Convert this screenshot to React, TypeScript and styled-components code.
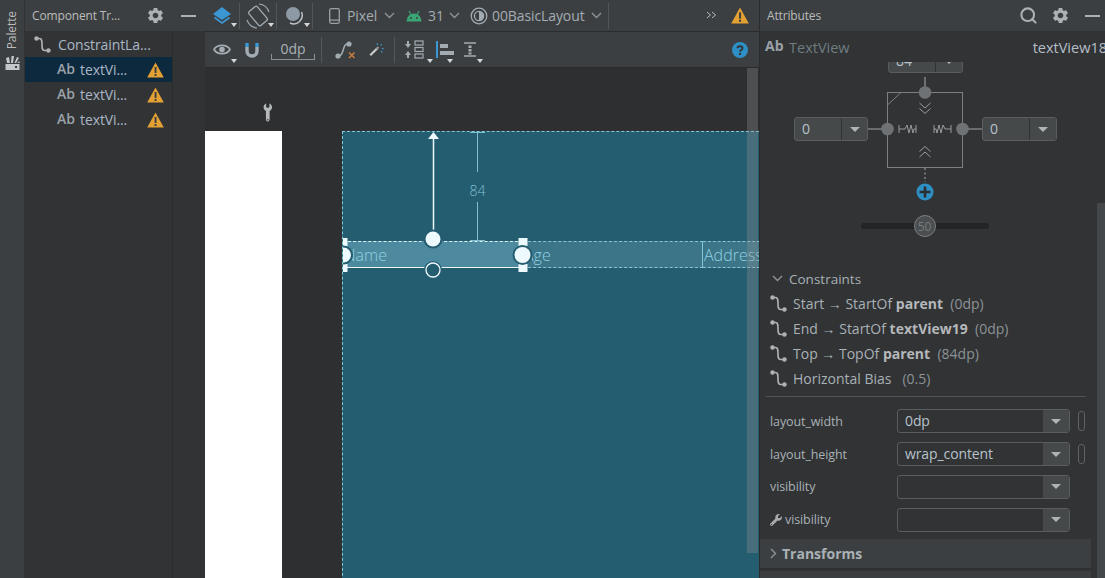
import React, { FC } from "react";
import styled, { createGlobalStyle } from "styled-components";
import { MdSettings } from "react-icons/md";
import { FaWrench } from "react-icons/fa";
import { LuSearch } from "react-icons/lu";

const GlobalStyle = createGlobalStyle`
  html, body {
    margin: 0;
    padding: 0;
    height: 100%;
    overflow: hidden;
    background: #313335;
    font-family: "Open Sans", "Liberation Sans", sans-serif;
    color: #bbbbbb;
  }
  * { box-sizing: border-box; }
`;

const Page = styled.div`
  display: flex;
  width: 1105px;
  height: 578px;
  overflow: hidden;
`;

const PaletteStrip = styled.div`
  width: 25px;
  flex: none;
  background: #3c3f41;
  border-right: 1px solid #323232;
  display: flex;
  flex-direction: column;
  align-items: center;
  padding-top: 11px;
  gap: 6px;
`;

const PaletteLabel = styled.div`
  writing-mode: vertical-rl;
  transform: rotate(180deg);
  font-size: 12px;
  line-height: 14px;
  letter-spacing: -0.1px;
`;

const TreePanel = styled.div`
  width: 180px;
  flex: none;
  display: flex;
  flex-direction: column;
  background: #313335;
`;

const PanelHeader = styled.div`
  height: 32px;
  flex: none;
  display: flex;
  align-items: center;
  background: #3c3f41;
  border-bottom: 1px solid #323232;
  padding-left: 7px;
  font-size: 12px;
  color: #bbbbbb;
`;

const HeaderTitle = styled.span`
  flex: 1;
  letter-spacing: -0.15px;
`;

const HeaderIcon = styled.span<{ $w: number }>`
  width: ${(p) => p.$w}px;
  flex: none;
  display: flex;
  justify-content: center;
  align-items: center;
  color: #aeb1b3;
  font-size: 19px;
`;

const MinusBar = styled.span`
  width: 15px;
  height: 2px;
  background: #aeb1b3;
  display: block;
`;

const TreeBody = styled.div`
  flex: 1;
  display: flex;
`;

const TreeList = styled.div`
  width: 147px;
  flex: none;
  border-right: 1px solid #2b2d2e;
  box-sizing: content-box;
`;

const TreeRow = styled.div<{ $selected?: boolean; $child?: boolean }>`
  height: 25px;
  display: flex;
  align-items: center;
  padding-left: ${(p) => (p.$child ? 32 : 9)}px;
  background: ${(p) => (p.$selected ? "#0d293e" : "transparent")};
  font-size: 14px;
  color: #a9b7c6;
  letter-spacing: -0.1px;
`;

const TreeConnectorGap = styled.span`
  width: 7px;
  flex: none;
`;

const TreeAb = styled.span`
  font-size: 14px;
  font-weight: 600;
  color: #9aa2a8;
  width: 23px;
  margin-top: -2px;
`;

const TreeName = styled.span`
  flex: 1;
`;

const TreeWarn = styled.span`
  width: 25px;
  display: flex;
`;

const Middle = styled.div`
  width: 554px;
  flex: none;
  display: flex;
  flex-direction: column;
`;

const Toolbar = styled.div<{ $h: number }>`
  height: ${(p) => p.$h}px;
  flex: none;
  display: flex;
  align-items: center;
  background: #3c3f41;
  border-bottom: 1px solid #2b2b2b;
  font-size: 14px;
  color: #a3acb3;
`;

const ToolButton = styled.div<{ $w: number }>`
  width: ${(p) => p.$w}px;
  height: 100%;
  flex: none;
  position: relative;
  display: flex;
  align-items: center;
  justify-content: center;
`;

const ToolCaret = styled.span`
  position: absolute;
  right: 2px;
  bottom: 4px;
  width: 0;
  height: 0;
  border-left: 3.5px solid transparent;
  border-right: 3.5px solid transparent;
  border-top: 4px solid #d5d7d8;
`;

const ToolSep = styled.span`
  width: 1px;
  height: 26px;
  flex: none;
  background: #515658;
`;

const ToolText = styled.span<{ $w: number }>`
  width: ${(p) => p.$w}px;
  flex: none;
  letter-spacing: -0.1px;
  white-space: nowrap;
`;

const Spacer = styled.span<{ $w?: number }>`
  flex: ${(p) => (p.$w ? "none" : "1")};
  width: ${(p) => p.$w || 0}px;
`;

const ZeroDp = styled.div`
  width: 44px;
  margin: 0 3px 0 0;
  height: 20px;
  border-bottom: 1px solid #8b9094;
  position: relative;
  text-align: center;
  font-size: 14px;
  line-height: 17px;
  color: #a9b1b6;
  &::before,
  &::after {
    content: "";
    position: absolute;
    bottom: 0;
    height: 5px;
    width: 1px;
    background: #8b9094;
  }
  &::before { left: 0; }
  &::after { right: 0; }
`;

const Canvas = styled.div`
  flex: 1;
  position: relative;
  background: #2d2f30;
  display: flex;
  align-items: flex-start;
  padding-top: 63px;
  overflow: hidden;
`;

const WrenchMark = styled.span`
  position: absolute;
  left: 56px;
  top: 36px;
  color: #b4b8ba;
  font-size: 15px;
  line-height: 1;
  transform: rotate(-45deg);
  display: block;
`;

const WhiteSheet = styled.div`
  width: 77px;
  height: 460px;
  flex: none;
  background: #ffffff;
`;

const Blueprint = styled.div`
  margin-left: 60px;
  flex: 1;
  height: 460px;
  position: relative;
  overflow: hidden;
  background: #255d70;
  border-top: 1px dashed #82c6d8;
  border-left: 1px dashed #82c6d8;
  padding-top: 109px;
`;

const FieldRow = styled.div`
  display: flex;
  height: 27px;
`;

const Field = styled.div<{ $w: number; $selected?: boolean }>`
  width: ${(p) => p.$w}px;
  flex: none;
  overflow: hidden;
  white-space: nowrap;
  background: ${(p) => (p.$selected ? "#4e8a9f" : "#3c7587")};
  border-top: 1px dashed ${(p) => (p.$selected ? "#dff3f9" : "#82c6d8")};
  border-bottom: 1px ${(p) => (p.$selected ? "solid #eef9fd" : "dashed #82c6d8")};
  border-right: 1px solid #82c6d8;
  font-size: 16px;
  line-height: 26px;
  font-weight: 300;
  color: #8fd0e2;
  padding-left: 1px;
`;

const Overlay = styled.svg`
  position: absolute;
  left: 0;
  top: 0;
`;

const Dim84 = styled.text`
  font-family: "Open Sans", sans-serif;
  font-size: 14px;
  font-weight: 300;
  fill: #7fbfd2;
`;

const CanvasScrollbar = styled.div`
  position: absolute;
  z-index: 2;
  left: 542px;
  top: 0;
  width: 11px;
  height: 485px;
  background: rgba(140, 145, 148, 0.34);
`;

const AttrPanel = styled.div`
  flex: 1;
  display: flex;
  flex-direction: column;
  background: #313335;
  border-left: 1px solid #2b2b2b;
  min-width: 0;
`;

const AttrTitleRow = styled.div`
  height: 30px;
  flex: none;
  display: flex;
  align-items: center;
  padding-left: 5px;
  font-size: 14.5px;
  color: #6f7d80;
  white-space: nowrap;
  overflow: hidden;
`;

const AttrAb = styled.span`
  font-weight: 700;
  font-size: 14px;
  color: #9aa2a8;
  width: 24px;
  margin-top: -3px;
`;

const AttrId = styled.span`
  margin-left: auto;
  margin-right: -2px;
  color: #b5bfc7;
  font-size: 14.5px;
`;

const AttrScroll = styled.div`
  flex: 1;
  position: relative;
  overflow: hidden;
  padding-right: 14px;
`;

const AttrScrollThumb = styled.div`
  position: absolute;
  right: 0;
  top: 141px;
  bottom: 0;
  width: 8px;
  background: #45484a;
`;

const Widget = styled.div`
  display: flex;
  flex-direction: column;
  align-items: center;
  margin-top: -13px;
`;

const WidgetRow = styled.div`
  display: flex;
  align-items: center;
`;

const DropBox = styled.div<{ $w: number; $split: number; $h?: number }>`
  width: ${(p) => p.$w}px;
  height: ${(p) => p.$h || 24}px;
  flex: none;
  display: flex;
  align-items: center;
  border: 1px solid #595d5f;
  border-radius: 3px;
  background: #45494a;
  font-size: 14px;
  color: #b7c2cb;
  overflow: hidden;

  & > span:first-child {
    width: ${(p) => p.$split}px;
    padding-left: 7px;
    line-height: 22px;
    letter-spacing: -0.1px;
  }
`;

const ValueBox = styled(DropBox)`
  background: #313335;
`;

const DropArrow = styled.span`
  flex: 1;
  align-self: stretch;
  background: #45494a;
  border-left: 1px solid #313335;
  display: flex;
  align-items: center;
  justify-content: center;
  &::after {
    content: "";
    border-left: 5px solid transparent;
    border-right: 5px solid transparent;
    border-top: 5px solid #b0b3b5;
  }
`;

const PlusWrap = styled.div`
  display: flex;
  margin: -2px 2px 0 0;
`;

const SliderTrack = styled.div`
  position: relative;
  width: 128px;
  height: 6px;
  margin: 22px 2px 0 0;
  border-radius: 3px;
  background: #232425;
`;

const SliderThumb = styled.div`
  position: absolute;
  left: 53px;
  top: -8px;
  width: 22px;
  height: 22px;
  border-radius: 50%;
  border: 1px solid #7d7f80;
  background: #4b4e50;
  color: #767a7c;
  font-size: 12px;
  line-height: 21px;
  text-align: center;
`;

const SectionHead = styled.div`
  display: flex;
  align-items: center;
  height: 25px;
  margin-top: 37px;
  padding-left: 12px;
  gap: 6px;
  font-size: 13.5px;
  color: #a9b1b6;
`;

const ConstraintRow = styled.div`
  display: flex;
  align-items: center;
  height: 25px;
  padding-left: 10px;
  gap: 6px;
  font-size: 14px;
  color: #a9b1b6;
  white-space: pre;

  b {
    font-weight: 700;
    color: #b4b8ba;
  }
  em {
    font-style: normal;
    color: #8c9296;
  }
`;

const Divider = styled.div`
  height: 1px;
  margin: 5px 5px 0 6px;
  background: #515456;
`;

const PropList = styled.div`
  margin-top: 12px;
  display: flex;
  flex-direction: column;
  gap: 8.3px;
`;

const PropRow = styled.div`
  display: flex;
  align-items: center;
  height: 24.5px;
  padding-left: 10px;
`;

const PropLabel = styled.span`
  width: 127px;
  flex: none;
  display: flex;
  align-items: center;
  gap: 3px;
  font-size: 12.5px;
  letter-spacing: -0.1px;
  color: #a9b1b6;
`;

const Pill = styled.span`
  width: 7px;
  height: 20px;
  margin-left: 8px;
  border: 1px solid #5e6264;
  border-radius: 3px;
`;

const TransformBar = styled.div`
  height: 30px;
  margin-top: 7px;
  display: flex;
  align-items: center;
  gap: 3px;
  padding-left: 8px;
  background: #3c3f41;
  border-bottom: 1px solid #2e3031;
  font-size: 14px;
  font-weight: 700;
  color: #a9b1b6;
`;

const NextBar = styled.div`
  height: 10px;
  margin-top: 2px;
  background: #3c3f41;
`;

const Warn: FC<{ size?: number }> = ({ size = 16 }) => (
  <svg width={size + 1} height={size} viewBox="0 0 17 16">
    <path d="M8.5 0.5 L16.8 15.5 H0.2 Z" fill="#e3a033" />
    <rect x="7.6" y="5" width="1.9" height="6" fill="#3c3f41" />
    <rect x="7.6" y="12" width="1.9" height="2" fill="#3c3f41" />
  </svg>
);

const ConnectorIcon: FC = () => (
  <svg width="17" height="17" viewBox="0 0 17 17" style={{ flex: "none" }}>
    <circle cx="2.5" cy="2.5" r="2.2" fill="#b0b3b5" />
    <circle cx="14.5" cy="14.5" r="2.2" fill="#b0b3b5" />
    <path d="M3 2.5 H5.5 C8 2.5 8 5 8 8.5 C8 12 8 14.5 10.5 14.5 H14" fill="none" stroke="#b0b3b5" strokeWidth="1.6" />
  </svg>
);

const Chevron: FC<{ dir?: "down" | "right"; color?: string }> = ({ dir = "down", color = "#8d9396" }) => (
  <svg width="11" height="11" viewBox="0 0 11 11" style={{ flex: "none" }}>
    <path
      d={dir === "down" ? "M1 3 L5.5 7.5 L10 3" : "M3 1 L7.5 5.5 L3 10"}
      fill="none"
      stroke={color}
      strokeWidth="1.4"
    />
  </svg>
);

const PaletteIcon: FC = () => (
  <svg width="15" height="15" viewBox="0 0 15 15">
    <rect x="0.5" y="9" width="14" height="6" fill="#c4c7c9" />
    <rect x="10" y="11" width="2" height="2" fill="#3c3f41" />
    <path d="M2 8 L1 3 L4 2 L5 8 Z M6 8 L6.5 1 L9 1 L8 8 Z M9.5 8 L12 2 L14 3 L11 8 Z M12 8 L14.5 6 L14.5 8 Z" fill="#c4c7c9" />
  </svg>
);

const LayersIcon: FC = () => (
  <svg width="20" height="20" viewBox="0 0 20 20">
    <path d="M10 1 L19 8 L10 14 L1 8 Z" fill="#3b97d3" />
    <path d="M2.5 11.5 L10 17 L17.5 11.5" fill="none" stroke="#3b97d3" strokeWidth="1.8" />
  </svg>
);

const RotateIcon: FC = () => (
  <svg width="24" height="26" viewBox="0 0 24 26">
    <g transform="rotate(-40 12 13)" fill="none" stroke="#a3acb3" strokeWidth="1.3">
      <rect x="6.5" y="4" width="11" height="18" rx="1.6" />
    </g>
    <path d="M13 1 A12 12 0 0 1 23 9 M11 25 A12 12 0 0 1 1 17" fill="none" stroke="#a3acb3" strokeWidth="1.1" />
  </svg>
);

const NightIcon: FC = () => (
  <svg width="19" height="19" viewBox="0 0 19 19">
    <circle cx="8" cy="8" r="7" fill="#8d9aa5" />
    <path d="M16.5 6 A8.5 8.5 0 0 1 5 17" fill="none" stroke="#c2c6c8" strokeWidth="1.4" />
  </svg>
);

const PhoneIcon: FC = () => (
  <svg width="11" height="16" viewBox="0 0 11 16">
    <rect x="0.7" y="0.7" width="9.6" height="14.6" rx="1.5" fill="none" stroke="#9aa2a8" strokeWidth="1.3" />
    <rect x="1" y="11.5" width="9" height="1.2" fill="#9aa2a8" />
  </svg>
);

const AndroidIcon: FC = () => (
  <svg width="16" height="12" viewBox="0 0 16 12">
    <path d="M0.5 11.5 A7.5 8 0 0 1 15.5 11.5 Z" fill="#3aa675" />
    <path d="M3 1 L5 4.5 M13 1 L11 4.5" stroke="#3aa675" strokeWidth="1.2" />
    <circle cx="5" cy="8" r="1" fill="#3c3f41" />
    <circle cx="11" cy="8" r="1" fill="#3c3f41" />
  </svg>
);

const ThemeIcon: FC = () => (
  <svg width="18" height="18" viewBox="0 0 18 18">
    <circle cx="9" cy="9" r="7.8" fill="none" stroke="#a3acb3" strokeWidth="1.3" />
    <circle cx="9" cy="9" r="4.6" fill="none" stroke="#a3acb3" strokeWidth="1.3" />
    <path d="M9 4.4 A4.6 4.6 0 0 1 9 13.6 Z" fill="#a3acb3" />
  </svg>
);

const OverflowIcon: FC = () => (
  <svg width="11" height="9" viewBox="0 0 11 9">
    <path d="M1 1 L4.5 4 L1 7 M6 1 L9.5 4 L6 7" fill="none" stroke="#b9bcbe" strokeWidth="1" />
  </svg>
);

const EyeIcon: FC = () => (
  <svg width="18" height="13" viewBox="0 0 18 13">
    <path d="M1 6.5 C4 1 14 1 17 6.5 C14 12 4 12 1 6.5 Z" fill="none" stroke="#a3acb3" strokeWidth="1.7" />
    <circle cx="9" cy="6.5" r="2.8" fill="#a3acb3" />
  </svg>
);

const MagnetIcon: FC = () => (
  <svg width="16" height="16" viewBox="0 0 16 16">
    <path d="M3 5 V9 A5 5 0 0 0 13 9 V5" fill="none" stroke="#a3acb3" strokeWidth="3.4" />
    <path d="M3 1 V5 M13 1 V5" stroke="#3b97d3" strokeWidth="3.4" />
  </svg>
);

const ClearConstraintsIcon: FC = () => (
  <svg width="21" height="18" viewBox="0 0 21 18">
    <circle cx="14" cy="3" r="2.6" fill="#a3acb3" />
    <circle cx="3" cy="15" r="2.6" fill="#a3acb3" />
    <path d="M12 3 C7.5 3 9 15 4 15" fill="none" stroke="#a3acb3" strokeWidth="1.5" />
    <path d="M14 11.5 L19.5 17 M19.5 11.5 L14 17" stroke="#c77d3f" strokeWidth="1.6" />
  </svg>
);

const WandIcon: FC = () => (
  <svg width="18" height="17" viewBox="0 0 18 17">
    <path d="M1.5 15.5 L10 7" stroke="#c9cccd" strokeWidth="2.6" />
    <path d="M9 8 L11.5 5.5" stroke="#8b8f91" strokeWidth="2.6" />
    <path d="M10 1 V3 M15.5 2 L14 3.5 M17.5 7.5 H15.5 M16 12 L14.5 10.5" stroke="#3b97d3" strokeWidth="1.5" />
  </svg>
);

const PackIcon: FC = () => (
  <svg width="20" height="19" viewBox="0 0 20 19">
    <path d="M3 8 L6 4 H4 V1 H2 V4 H0 Z M3 11 L6 15 H4 V18 H2 V15 H0 Z" fill="#a3acb3" />
    <g fill="none" stroke="#a3acb3" strokeWidth="1.2">
      <rect x="10" y="1" width="8" height="4" />
      <rect x="10" y="7.5" width="8" height="4" />
      <rect x="10" y="14" width="8" height="4" />
    </g>
  </svg>
);

const AlignIcon: FC = () => (
  <svg width="19" height="17" viewBox="0 0 19 17">
    <rect x="0" y="0" width="2" height="17" fill="#3b97d3" />
    <rect x="4" y="3" width="8" height="4" fill="#a3acb3" />
    <rect x="4" y="10" width="14" height="4" fill="#a3acb3" />
  </svg>
);

const MarginIcon: FC = () => (
  <svg width="14" height="15" viewBox="0 0 14 15">
    <path d="M1 1 H13 M1 14 H13" stroke="#a3acb3" strokeWidth="1.4" />
    <rect x="5.5" y="3.5" width="3" height="2.5" fill="#a3acb3" />
    <rect x="5.5" y="7" width="3" height="2.5" fill="#a3acb3" />
    <rect x="5.5" y="10.5" width="3" height="2" fill="#a3acb3" />
  </svg>
);

const HelpIcon: FC = () => (
  <svg width="16" height="16" viewBox="0 0 16 16">
    <circle cx="8" cy="8" r="8" fill="#2d8fc4" />
    <path d="M5.5 6.2 C5.5 3.6 10.5 3.6 10.5 6.2 C10.5 8 8 7.8 8 9.8" fill="none" stroke="#313335" strokeWidth="1.8" />
    <rect x="7" y="11" width="2" height="2" fill="#313335" />
  </svg>
);

const ConstraintBox: FC = () => (
  <svg width="114" height="112" viewBox="0 0 114 112" style={{ flex: "none" }}>
    <g fill="none" stroke="#7d8082" strokeWidth="1">
      <rect x="19.5" y="19.5" width="75" height="75" />
      <path d="M19.5 32 L33 19.5" />
      <path d="M57 4 V19" strokeWidth="1.6" />
      <path d="M0 56 H19 M95 56 H114" strokeWidth="1.6" />
      <path d="M57 95 V109" strokeWidth="1.6" strokeDasharray="2 2.5" />
      <path d="M51.5 30 L57 35 L62.5 30 M51.5 35.5 L57 40.5 L62.5 35.5" stroke="#9a9d9f" />
      <path d="M51.5 84 L57 79 L62.5 84 M51.5 78.5 L57 73.5 L62.5 78.5" stroke="#9a9d9f" />
      <path d="M31 52 V60 M31 56 H37 L39 52 L41 60 L43 52 L45 60 L46 56 H48 M48 52 V60" stroke="#9a9d9f" />
      <path d="M83 52 V60 M83 56 H77 L75 52 L73 60 L71 52 L69 60 L68 56 H66 M66 52 V60" stroke="#9a9d9f" />
    </g>
    <circle cx="57" cy="19.5" r="6.3" fill="#6f7274" />
    <circle cx="19.5" cy="56" r="6.3" fill="#6f7274" />
    <circle cx="94.5" cy="56" r="6.3" fill="#6f7274" />
  </svg>
);

const PlusIcon: FC = () => (
  <svg width="18" height="18" viewBox="0 0 18 18" style={{ flex: "none" }}>
    <circle cx="9" cy="9" r="8.5" fill="#2d8fc4" />
    <path d="M9 3.5 V14.5 M3.5 9 H14.5" stroke="#2b2d2e" strokeWidth="2.6" />
  </svg>
);

const TREE_ITEMS = [true, false, false];

const CONSTRAINTS: React.ReactNode[] = [
  <>Start → StartOf <b>parent</b>  <em>(0dp)</em></>,
  <>End → StartOf <b>textView19</b>  <em>(0dp)</em></>,
  <>Top → TopOf <b>parent</b>  <em>(84dp)</em></>,
  <>Horizontal Bias   <em>(0.5)</em></>,
];

const App: FC = () => {
  return (
    <>
      <GlobalStyle />
      <Page>
        <PaletteStrip>
          <PaletteLabel>Palette</PaletteLabel>
          <PaletteIcon />
        </PaletteStrip>

        <TreePanel>
          <PanelHeader>
            <HeaderTitle>Component Tr...</HeaderTitle>
            <HeaderIcon $w={32}><MdSettings /></HeaderIcon>
            <HeaderIcon $w={34}><MinusBar /></HeaderIcon>
          </PanelHeader>
          <TreeBody>
            <TreeList>
              <TreeRow>
                <ConnectorIcon />
                <TreeConnectorGap />
                <TreeName>ConstraintLa...</TreeName>
              </TreeRow>
              {TREE_ITEMS.map((selected, i) => (
                <TreeRow key={i} $child $selected={selected}>
                  <TreeAb>Ab</TreeAb>
                  <TreeName>textVi...</TreeName>
                  <TreeWarn><Warn /></TreeWarn>
                </TreeRow>
              ))}
            </TreeList>
          </TreeBody>
        </TreePanel>

        <Middle>
          <Toolbar $h={32}>
            <ToolButton $w={34}><LayersIcon /><ToolCaret /></ToolButton>
            <ToolSep />
            <ToolButton $w={36}><RotateIcon /><ToolCaret /></ToolButton>
            <ToolSep />
            <ToolButton $w={35}><NightIcon /><ToolCaret /></ToolButton>
            <ToolSep />
            <Spacer $w={16} />
            <PhoneIcon />
            <Spacer $w={7} />
            <ToolText $w={37}>Pixel</ToolText>
            <Chevron />
            <Spacer $w={11} />
            <AndroidIcon />
            <Spacer $w={6} />
            <ToolText $w={21}>31</ToolText>
            <Chevron />
            <Spacer $w={10} />
            <ThemeIcon />
            <Spacer $w={4} />
            <ToolText $w={99}>00BasicLayout</ToolText>
            <Chevron />
            <Spacer $w={6} />
            <ToolSep />
            <Spacer />
            <OverflowIcon />
            <Spacer $w={14} />
            <Warn size={17} />
            <Spacer $w={10} />
          </Toolbar>
          <Toolbar $h={36}>
            <ToolButton $w={34}><EyeIcon /><ToolCaret /></ToolButton>
            <ToolButton $w={26}><MagnetIcon /></ToolButton>
            <Spacer $w={6} />
            <ZeroDp>0dp</ZeroDp>
            <Spacer $w={3} />
            <ToolSep />
            <ToolButton $w={47}><ClearConstraintsIcon /></ToolButton>
            <ToolButton $w={15}><WandIcon /></ToolButton>
            <Spacer $w={10} />
            <ToolSep />
            <ToolButton $w={40}><PackIcon /><ToolCaret /></ToolButton>
            <ToolButton $w={20}><AlignIcon /><ToolCaret /></ToolButton>
            <ToolButton $w={30}><MarginIcon /><ToolCaret /></ToolButton>
            <Spacer />
            <HelpIcon />
            <Spacer $w={11} />
          </Toolbar>
          <Canvas>
            <WrenchMark><FaWrench /></WrenchMark>
            <WhiteSheet />
            <Blueprint>
              <FieldRow>
                <Field $w={180} $selected>Name</Field>
                <Field $w={180}>Age</Field>
                <Field $w={57}>Address</Field>
              </FieldRow>
              <Overlay width="417" height="150" viewBox="0 0 417 150">
                <path d="M90.5 108 V6" stroke="#eef9fd" strokeWidth="1.5" />
                <path d="M90.5 0 L96 7 H85 Z" fill="#eef9fd" />
                <path d="M134.5 0 V40 M134.5 70 V109 M127 0.5 H142 M127 108.5 H142" stroke="#7fbfd2" strokeWidth="1" fill="none" />
                <Dim84 x="134.5" y="64" textAnchor="middle">84</Dim84>

                <circle cx="90" cy="107" r="9.5" fill="#255d70" />
                <circle cx="90" cy="107" r="7.5" fill="#eef9fd" />
                <circle cx="90" cy="138" r="9" fill="#255d70" />
                <circle cx="90" cy="138" r="7" fill="#255d70" stroke="#eef9fd" strokeWidth="1.3" />

                <rect x="0" y="106" width="4.5" height="8" fill="#eef9fd" />
                <rect x="0" y="132" width="4.5" height="8" fill="#eef9fd" />
                <rect x="175.5" y="106" width="9" height="8" fill="#eef9fd" />
                <rect x="175.5" y="132" width="9" height="8" fill="#eef9fd" />

                <circle cx="0.5" cy="123" r="9.5" fill="#255d70" />
                <circle cx="0.5" cy="123" r="7.5" fill="#eef9fd" />
                <circle cx="179.5" cy="123" r="10" fill="#255d70" />
                <circle cx="179.5" cy="123" r="8" fill="#eef9fd" />
              </Overlay>
            </Blueprint>
            <CanvasScrollbar />
          </Canvas>
        </Middle>

        <AttrPanel>
          <PanelHeader>
            <HeaderTitle>Attributes</HeaderTitle>
            <HeaderIcon $w={26}><LuSearch strokeWidth={2.6} /></HeaderIcon>
            <HeaderIcon $w={38}><MdSettings /></HeaderIcon>
            <HeaderIcon $w={26}><MinusBar /></HeaderIcon>
          </PanelHeader>
          <AttrTitleRow>
            <AttrAb>Ab</AttrAb>
            TextView
            <AttrId>textView18</AttrId>
          </AttrTitleRow>
          <AttrScroll>
            <AttrScrollThumb />
            <Widget>
              <DropBox $w={75} $split={46}><span>84</span><DropArrow /></DropBox>
              <WidgetRow>
                <DropBox $w={74} $split={46}><span>0</span><DropArrow /></DropBox>
                <ConstraintBox />
                <DropBox $w={75} $split={46}><span>0</span><DropArrow /></DropBox>
              </WidgetRow>
              <PlusWrap><PlusIcon /></PlusWrap>
              <SliderTrack>
                <SliderThumb>50</SliderThumb>
              </SliderTrack>
            </Widget>

            <SectionHead>
              <Chevron />
              Constraints
            </SectionHead>
            {CONSTRAINTS.map((c, i) => (
              <ConstraintRow key={i}>
                <ConnectorIcon />
                <span>{c}</span>
              </ConstraintRow>
            ))}
            <Divider />

            <PropList>
              <PropRow>
                <PropLabel>layout_width</PropLabel>
                <ValueBox $w={173} $split={144}><span>0dp</span><DropArrow /></ValueBox>
                <Pill />
              </PropRow>
              <PropRow>
                <PropLabel>layout_height</PropLabel>
                <ValueBox $w={173} $split={144}><span>wrap_content</span><DropArrow /></ValueBox>
                <Pill />
              </PropRow>
              <PropRow>
                <PropLabel>visibility</PropLabel>
                <ValueBox $w={173} $split={144}><span /><DropArrow /></ValueBox>
              </PropRow>
              <PropRow>
                <PropLabel><FaWrench size={12} color="#a8acae" />visibility</PropLabel>
                <ValueBox $w={173} $split={144}><span /><DropArrow /></ValueBox>
              </PropRow>
            </PropList>

            <TransformBar>
              <Chevron dir="right" />
              Transforms
            </TransformBar>
            <NextBar />
          </AttrScroll>
        </AttrPanel>
      </Page>
    </>
  );
};

export default App;
